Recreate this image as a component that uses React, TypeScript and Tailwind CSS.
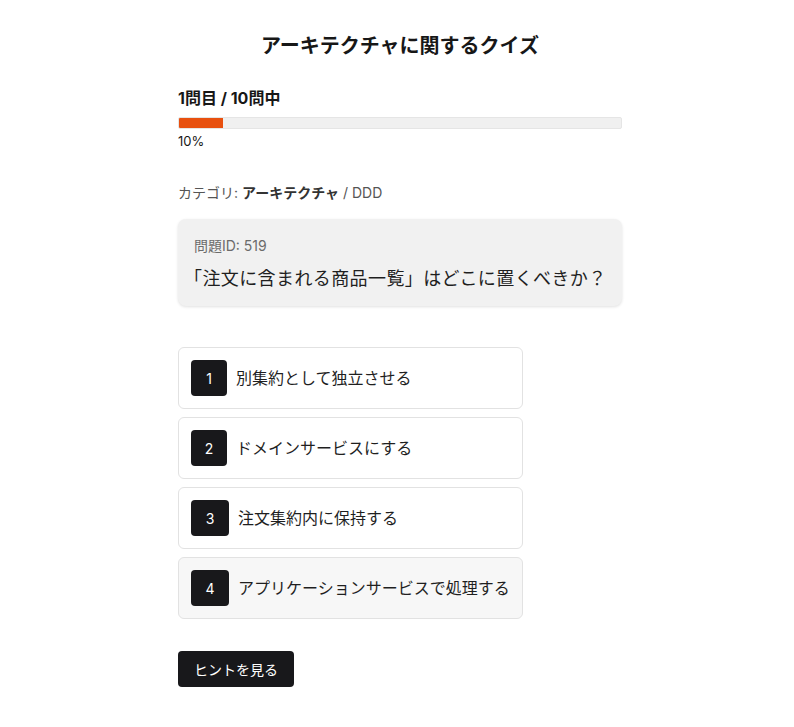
const options = [
  { no: 1, label: '別集約として独立させる', w: 'w-9' },
  { no: 2, label: 'ドメインサービスにする', w: 'w-9' },
  { no: 3, label: '注文集約内に保持する', w: 'w-[38px]' },
  { no: 4, label: 'アプリケーションサービスで処理する', w: 'w-[38px]' },
];

export default function App() {
  const progress = 10;

  return (
    <div className="min-h-screen bg-white pl-[6px] font-['Inter','Noto_Sans_CJK_JP',sans-serif] text-[#171717]">
      <div className="mx-auto w-[444px] pt-[32px] pb-10">
        <h1 className="text-center text-[20px] font-bold leading-[28px]">
          アーキテクチャに関するクイズ
        </h1>

        <div className="mt-[26px]">
          <p className="text-[16px] font-bold leading-[24px]">1問目 / 10問中</p>
          <div className="mt-[7px] h-[12px] w-full overflow-hidden rounded-[2px] border border-[#e5e5e5] bg-[#f0f0f0]">
            <div className="h-full bg-[#e8500f]" style={{ width: `${progress}%` }} />
          </div>
          <p className="mt-[3px] text-[13px] leading-[18px]">{progress}%</p>
        </div>

        <p className="mt-[33px] text-[14px] leading-[20px] text-[#555]">
          カテゴリ: <span className="font-bold text-[#333]">アーキテクチャ</span> / DDD
        </p>

        <div className="mt-[16px] rounded-[8px] bg-[#f1f1f1] px-4 pt-[17px] pb-[13px] shadow-[0_1px_3px_rgba(0,0,0,0.12)]">
          <p className="text-[14px] leading-[20px] text-[#6b6b6b]">問題ID: 519</p>
          <p className="mt-[9px] -ml-[10px] whitespace-nowrap text-[18px] leading-[28px] tracking-[0.4px] text-[#1f1f1f]">
            「注文に含まれる商品一覧」はどこに置くべきか？
          </p>
        </div>

        <div className="mt-[41px] flex w-[345px] flex-col gap-[8px]">
          {options.map((o) => (
            <button
              key={o.no}
              className={`flex items-center gap-[9px] rounded-[6px] border border-[#e2e2e2] p-[12px] text-left ${
                o.no === 4 ? 'bg-[#f7f7f7]' : 'bg-white'
              }`}
            >
              <span
                className={`flex h-9 ${o.w} shrink-0 items-center justify-center rounded-[4px] bg-[#18181b] text-[14px] text-white`}
              >
                {o.no}
              </span>
              <span className="text-[16px] leading-[24px] text-[#1f1f1f]">{o.label}</span>
            </button>
          ))}
        </div>

        <button className="mt-[32px] h-9 rounded-[4px] bg-[#18181b] px-4 text-[14px] text-white">
          ヒントを見る
        </button>
      </div>
    </div>
  );
}
